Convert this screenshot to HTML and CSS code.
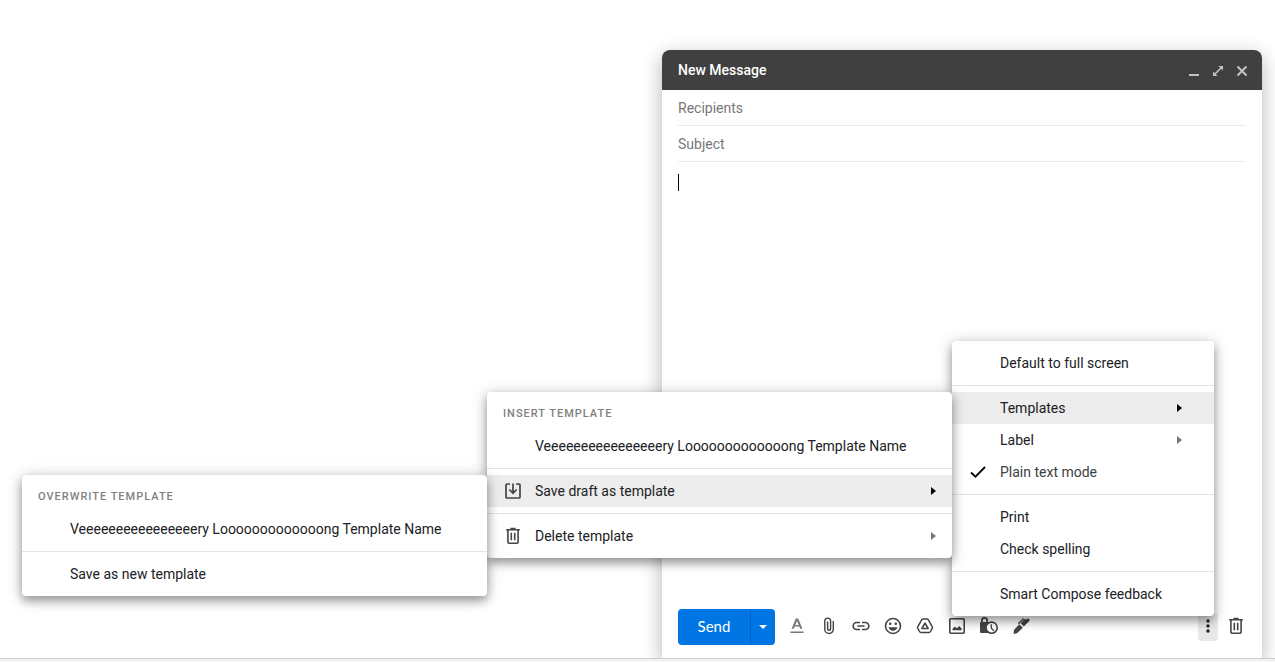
FILE: index.html
```html
<!DOCTYPE html>
<html lang="en">
<head>
<meta charset="utf-8">
<title>New Message</title>
<link rel="stylesheet" href="styles.css">
</head>
<body>
<div class="page">
  <main class="workspace">
    <section class="compose" aria-label="New Message">
      <header class="compose-header">
        <h1 class="compose-title">New Message</h1>
        <div class="window-controls">
          <button class="window-button" aria-label="Minimize"><svg viewBox="0 0 12 12"><path d="M1 9h10v2H1z"/></svg></button>
          <button class="window-button" aria-label="Full screen"><svg viewBox="0 0 12 12"><path d="M6.500 1H11v4.500L9.300 3.800 3.800 9.300 5.500 11H1V6.500l1.700 1.700 5.500-5.500z"/></svg></button>
          <button class="window-button" aria-label="Close"><svg viewBox="0 0 12 12"><path d="M1.500 1.500l9 9M10.500 1.500l-9 9" fill="none" stroke="currentColor" stroke-width="2"/></svg></button>
        </div>
      </header>
      <div class="fields">
        <input class="field" type="text" placeholder="Recipients" aria-label="Recipients">
        <input class="field" type="text" placeholder="Subject" aria-label="Subject">
      </div>
      <div class="editor">
        <textarea class="message" aria-label="Message body"></textarea>
        <span class="caret"></span>
      </div>
      <footer class="toolbar">
        <div class="send-group">
          <button class="send">Send</button>
          <button class="send-more" aria-label="More send options"><span class="arrow-down"></span></button>
        </div>
        <div class="tools">
          <button class="tool tool-muted" aria-label="Formatting options"><svg viewBox="0 0 20 20"><path d="M3.500 15.500h13V17h-13zM8.800 2.500h2.400l4.200 10.300h-2.200l-.9-2.300H7.700l-.9 2.300H4.600zM10 4.900L8.300 8.900h3.400z"/></svg></button>
          <button class="tool" aria-label="Attach files"><svg viewBox="0 0 20 20"><path d="M14.300 5v8.300a4.200 4.200 0 0 1-8.500 0V5a2.900 2.900 0 0 1 5.800 0v7.800a1.500 1.500 0 0 1-3 0V5.500" fill="none" stroke="currentColor" stroke-width="1.400"/></svg></button>
          <button class="tool" aria-label="Insert link"><svg viewBox="0 0 20 20"><path d="M9 6.500H5.700a3.500 3.500 0 0 0 0 7H9M11 6.500h3.300a3.500 3.500 0 0 1 0 7H11M6.500 10h7" fill="none" stroke="currentColor" stroke-width="1.700"/></svg></button>
          <button class="tool" aria-label="Insert emoji"><svg viewBox="0 0 20 20"><circle cx="10" cy="10" r="7.500" fill="none" stroke="currentColor" stroke-width="1.600"/><circle cx="7.200" cy="7.800" r="1.300"/><circle cx="12.800" cy="7.800" r="1.300"/><path d="M5.500 11.300h9a4.700 4.700 0 0 1-9 0z"/></svg></button>
          <button class="tool" aria-label="Insert from Drive"><svg viewBox="0 0 20 20"><path d="M8 3h4q.8 0 1.200.7l4 7q.5.8 0 1.600l-1.700 3.200q-.5.900-1.500.9H6q-1 0-1.500-.9l-1.700-3.200q-.5-.8 0-1.600l4-7Q7.200 3 8 3z" fill="none" stroke="currentColor" stroke-width="1.500" stroke-linejoin="round"/><path d="M10 7.200l3.100 5.300H6.900z" fill="none" stroke="currentColor" stroke-width="1.600" stroke-linejoin="round"/></svg></button>
          <button class="tool" aria-label="Insert photo"><svg viewBox="0 0 20 20"><rect x="2.800" y="2.800" width="14.400" height="14.400" rx="1" fill="none" stroke="currentColor" stroke-width="1.600"/><path d="M5.500 14.300v-1.500l2.300-2.300 2 1.800 2.500-2.300 2.400 2.800v1.500z"/></svg></button>
          <button class="tool" aria-label="Confidential mode"><svg viewBox="0 0 20 20"><path d="M2 6V4.500a3.500 3.500 0 0 1 7 0V6h1v11H2.200Q1 17 1 15.800V7.200Q1 6 2 6zM3.800 6h3.400V4.500a1.700 1.700 0 0 0-3.400 0z" fill-rule="evenodd"/><circle cx="12.600" cy="11.700" r="5.600" fill="#fff" stroke="currentColor" stroke-width="1.600"/><path d="M12.300 8.300v3.900l2.600 2.600" fill="none" stroke="currentColor" stroke-width="1.300"/></svg></button>
          <button class="tool" aria-label="Insert signature"><svg viewBox="0 0 20 20"><path d="M8.300 8.200l3.500 3.500L6 17.200 2.500 18l.5-4z"/><path d="M9.500 7.200l4-4q.8-.8 1.500 0l.4.400.8-.8q.8-.8 1.600 0l.5.500q.8.800 0 1.600l-5.500 5.600z"/><path d="M12.700 2.500L7.300 7.800" stroke="currentColor" stroke-width="1.400"/></svg></button>
        </div>
        <div class="end-tools">
          <div class="more-anchor">
            <button class="tool more" aria-label="More options" aria-expanded="true"><svg viewBox="0 0 20 20"><circle cx="10" cy="4.500" r="1.900"/><circle cx="10" cy="10" r="1.900"/><circle cx="10" cy="15.500" r="1.900"/></svg></button>
            <ul class="menu menu-main">
              <li class="entry"><button class="item">Default to full screen</button></li>
              <li class="separator"></li>
              <li class="entry">
                <button class="item item-open">Templates<span class="arrow-right"></span></button>
                <ul class="menu submenu">
                  <li class="menu-heading">INSERT TEMPLATE</li>
                  <li class="entry"><button class="item">Veeeeeeeeeeeeeeeery Looooooooooooong Template Name</button></li>
                  <li class="separator"></li>
                  <li class="entry">
                    <button class="item item-open"><svg class="item-icon" viewBox="0 0 20 20"><path d="M7 3H4q-1 0-1 1v12q0 1 1 1h12q1 0 1-1V4q0-1-1-1h-3M10 2.500v9M6.300 8.500L10 12.200l3.700-3.700" fill="none" stroke="currentColor" stroke-width="1.700"/></svg>Save draft as template<span class="arrow-right"></span></button>
                    <ul class="menu submenu">
                      <li class="menu-heading">OVERWRITE TEMPLATE</li>
                      <li class="entry"><button class="item">Veeeeeeeeeeeeeeeery Looooooooooooong Template Name</button></li>
                      <li class="separator"></li>
                      <li class="entry"><button class="item">Save as new template</button></li>
                    </ul>
                  </li>
                  <li class="separator"></li>
                  <li class="entry"><button class="item"><svg class="item-icon" viewBox="0 0 20 20"><path d="M3.200 3.800h13.600M7.500 2.600h5M4.900 4v12q0 1.200 1.200 1.200h7.800q1.200 0 1.200-1.200V4M8.300 6.800v7.400M11.700 6.800v7.400" fill="none" stroke="currentColor" stroke-width="1.600"/></svg>Delete template<span class="arrow-right"></span></button></li>
                </ul>
              </li>
              <li class="entry"><button class="item">Label<span class="arrow-right"></span></button></li>
              <li class="entry"><label class="item item-check"><input class="check" type="checkbox" checked><svg class="item-icon check-mark" viewBox="0 0 20 20"><path d="M3 10.500l4.500 4.200L17 5" fill="none" stroke="currentColor" stroke-width="1.800"/></svg>Plain text mode</label></li>
              <li class="separator"></li>
              <li class="entry"><button class="item">Print</button></li>
              <li class="entry"><button class="item">Check spelling</button></li>
              <li class="separator"></li>
              <li class="entry"><button class="item">Smart Compose feedback</button></li>
            </ul>
          </div>
          <button class="tool" aria-label="Discard draft"><svg viewBox="0 0 20 20"><path d="M3.200 3.800h13.600M7.500 2.600h5M4.900 4v12q0 1.200 1.200 1.200h7.800q1.200 0 1.200-1.200V4M8.300 6.800v7.400M11.700 6.800v7.400" fill="none" stroke="currentColor" stroke-width="1.600"/></svg></button>
        </div>
      </footer>
    </section>
  </main>
  <div class="status-edge"></div>
</div>
</body>
</html>
```

FILE: styles.css
```css
* {
  box-sizing: border-box;
}

body {
  margin: 0;
  background: #fff;
  color: #202124;
  font-family: Roboto, "Liberation Sans", sans-serif;
  font-size: 14px;
}

button,
input,
textarea {
  margin: 0;
  padding: 0;
  border: 0;
  background: none;
  color: inherit;
  font: inherit;
  outline: none;
}

svg {
  display: block;
  fill: currentColor;
}

.page {
  display: flex;
  flex-direction: column;
  height: 100vh;
  overflow: hidden;
}

.workspace {
  display: flex;
  flex: 1;
  justify-content: flex-end;
  min-height: 0;
  padding: 50px 13px 0 0;
  overflow: hidden;
}

.status-edge {
  height: 4px;
  border-top: 1px solid #c8cace;
  background: #f1f3f4;
}

.compose {
  display: flex;
  flex-direction: column;
  width: 600px;
  border-radius: 8px 8px 0 0;
  background: #fff;
  box-shadow: 0 6px 20px rgba(0, 0, 0, 0.3);
}

.compose-header {
  display: flex;
  align-items: center;
  justify-content: space-between;
  height: 40px;
  padding: 0 14px 0 16px;
  border-radius: 8px 8px 0 0;
  background: #404040;
  color: #fff;
}

.compose-title {
  margin: 0;
  font-size: 14px;
  font-weight: 500;
}

.window-controls {
  display: flex;
  gap: 12px;
  padding-top: 2px;
  color: #c4c4c4;
}

.window-button,
.window-button svg {
  display: block;
  width: 12px;
  height: 12px;
}

.fields {
  display: flex;
  flex-direction: column;
  padding: 0 16px;
}

.field {
  height: 36px;
  border-bottom: 1px solid #ebebeb;
}

.field::placeholder {
  color: #777;
  opacity: 1;
}

.editor {
  position: relative;
  display: flex;
  flex: 1;
  padding: 12px 16px;
}

.message {
  flex: 1;
  resize: none;
}

.caret {
  position: absolute;
  top: 12px;
  left: 16px;
  width: 1px;
  height: 17px;
  background: #000;
}

.toolbar {
  display: flex;
  align-items: center;
  gap: 12px;
  padding: 0 16px 13px;
}

.send-group {
  display: flex;
  height: 36px;
  border-radius: 4px;
  overflow: hidden;
  background: #0075e4;
  color: #fff;
}

.send {
  width: 72px;
  padding-bottom: 2px;
  font-family: Lato, Roboto, sans-serif;
  font-size: 15px;
}

.send-more {
  display: flex;
  align-items: center;
  justify-content: center;
  width: 25px;
  border-left: 1px solid #0062c4;
}

.arrow-down {
  border: 4px solid transparent;
  border-top-color: #fff;
  border-bottom: 0;
}

.tools,
.end-tools {
  display: flex;
  gap: 12px;
  color: #444;
}

.end-tools {
  gap: 8px;
  margin-left: auto;
}

.tool {
  display: flex;
  align-items: center;
  justify-content: center;
  width: 20px;
  height: 28px;
  padding-bottom: 2px;
}

.tool svg {
  width: 20px;
  height: 20px;
}

.tool-muted {
  color: #777;
}

.more-anchor {
  position: relative;
}

.more {
  border-radius: 3px;
  background: #e8e8e8;
  color: #222;
}

.more svg {
  width: 18px;
  height: 18px;
}

.menu {
  position: absolute;
  margin: 0;
  padding: 6px 0;
  border-radius: 4px;
  background: #fff;
  box-shadow: 0 5px 10px rgba(0, 0, 0, 0.3), 0 2px 16px rgba(0, 0, 0, 0.22);
  color: #202124;
  list-style: none;
}

.menu-main {
  right: 4px;
  bottom: 25px;
  width: 262px;
}

.submenu {
  top: 0;
  right: 100%;
  width: 465px;
}

.entry {
  position: relative;
}

.item {
  position: relative;
  display: flex;
  align-items: center;
  width: 100%;
  height: 32px;
  padding: 0 16px 0 48px;
  text-align: left;
  white-space: nowrap;
}

.menu-main > .entry > .item {
  padding-right: 32px;
}

.item-open {
  background: #ededed;
}

.item-icon {
  width: 20px;
  height: 20px;
  margin: 0 12px 0 -32px;
  color: #444;
}

.item-check {
  color: #3c4043;
}

.check {
  position: absolute;
  width: 20px;
  height: 20px;
  left: 16px;
  opacity: 0;
}

.check-mark {
  color: #000;
}

.arrow-right {
  margin-left: auto;
  border: 4px solid transparent;
  border-right: 0;
  border-left: 5px solid #777;
}

.item-open .arrow-right {
  border-left-color: #000;
}

.separator {
  height: 1px;
  margin: 6px 0;
  background: #e4e4e4;
}

.menu-heading {
  height: 32px;
  padding: 0 16px;
  color: #808080;
  font-size: 11px;
  font-weight: 500;
  line-height: 31px;
  letter-spacing: 1px;
}
```
